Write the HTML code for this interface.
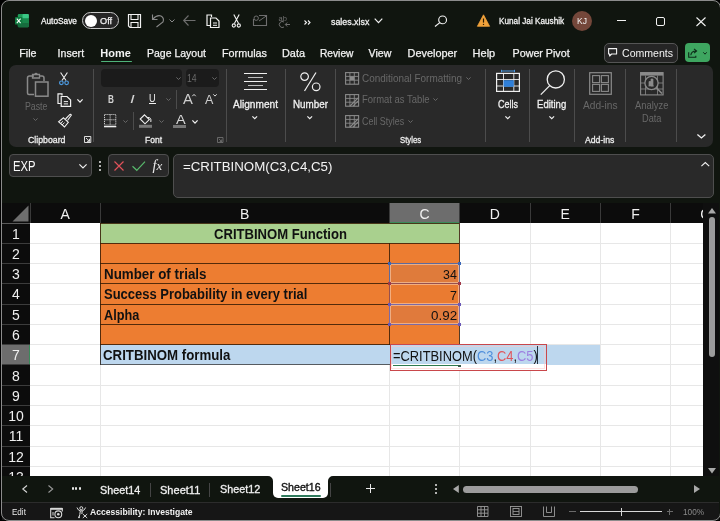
<!DOCTYPE html>
<html><head><meta charset="utf-8">
<style>
*{margin:0;padding:0;box-sizing:border-box}
html,body{width:720px;height:521px;overflow:hidden;background:#000}
body{position:relative;font-family:"Liberation Sans",sans-serif;color:#fff}
.a{position:absolute}
.t{position:absolute;white-space:pre}
svg{position:absolute;overflow:visible}
</style></head><body>
<div id="root" style="position:absolute;left:0;top:0;width:720px;height:521px;overflow:hidden;will-change:transform">

<div class="a" style="left:1.00px;top:0.40px;width:719.60px;height:520.60px;background:#10150f;border-radius:8px;"></div>
<svg style="left:15px;top:14px" width="14" height="14" viewBox="0 0 14 14">
<rect x="2.8" y="0" width="11" height="13.3" rx="1.2" fill="#1f9a58"/>
<rect x="7.5" y="0" width="6.3" height="4.4" rx="1" fill="#3bc785"/>
<rect x="2.8" y="4.4" width="11" height="4.5" fill="#19874c"/>
<rect x="2.8" y="8.9" width="11" height="4.4" rx="1" fill="#176c3e"/>
<rect x="0" y="3" width="7.4" height="7.6" rx="0.9" fill="#0f7a3f"/>
<path d="M1.8 4.6 L5.6 9.1 M5.6 4.6 L1.8 9.1" stroke="#fff" stroke-width="1.05"/>
</svg>
<div class="t" style="left:41.30px;top:16px;font-size:8.6px;line-height:10px;color:#f2f2f2;font-weight:400;transform:scaleX(0.9630);transform-origin:0 0;-webkit-text-stroke:0.3px #f2f2f2;">AutoSave</div>
<div class="a" style="left:82.00px;top:12.00px;width:36.50px;height:17.00px;border:1px solid #c8c8c8;border-radius:9px;background:#262626;"></div>
<div class="a" style="left:84.5px;top:14.5px;width:12px;height:12px;border-radius:6px;background:#fff"></div>
<div class="t" style="left:100.20px;top:16px;font-size:9.0px;line-height:10px;color:#f2f2f2;font-weight:400;transform:scaleX(1.0185);transform-origin:0 0;-webkit-text-stroke:0.25px #f2f2f2;">Off</div>
<svg style="left:127px;top:13px" width="15" height="16" viewBox="0 0 15 16">
<path d="M1.5 1.5 H13.5 V14.5 H3 L1.5 13 Z" fill="none" stroke="#f2f2f2" stroke-width="1.2"/>
<path d="M4 1.5 V6.5 H11 V1.5" fill="none" stroke="#f2f2f2" stroke-width="1.1"/>
<path d="M4 14.5 V9.5 H11 V14.5" fill="none" stroke="#f2f2f2" stroke-width="1.1"/>
</svg>
<svg style="left:151px;top:13px" width="14" height="15" viewBox="0 0 14 15">
<path d="M1.5 1.5 V6.5 H6.5" fill="none" stroke="#8a8a8a" stroke-width="1.1"/>
<path d="M1.8 6.2 Q6 1.5 10 3 Q13.5 5 12 9 L5.5 14" fill="none" stroke="#8a8a8a" stroke-width="1.1"/>
</svg>
<svg style="left:168.5px;top:19px" width="6" height="4" viewBox="0 0 6 4"><path d="M0.5 0.5 L3 3 L5.5 0.5" fill="none" stroke="#8a8a8a" stroke-width="1"/></svg>
<svg style="left:182.5px;top:15px" width="13" height="11" viewBox="0 0 13 11"><path d="M5.5 0.5 L0.7 5.5 L5.5 10.5 M0.7 5.5 H12.5" fill="none" stroke="#6e6e6e" stroke-width="1.1"/></svg>
<svg style="left:206px;top:14px" width="14" height="14" viewBox="0 0 14 14">
<path d="M5.5 3 V1 H1 V11.5 H4" fill="none" stroke="#f2f2f2" stroke-width="1.2"/>
<path d="M4.5 4 H10 L13 7 V13.5 H4.5 Z" fill="none" stroke="#f2f2f2" stroke-width="1.2"/>
<path d="M7 9 H11 M7 11.3 H11" stroke="#f2f2f2" stroke-width="1"/>
</svg>
<svg style="left:231px;top:14px" width="11" height="14" viewBox="0 0 11 14">
<path d="M2.8 0.5 L7.6 9.6 M8.2 0.5 L3.4 9.6" stroke="#f2f2f2" stroke-width="1.1"/>
<circle cx="2.8" cy="11.5" r="1.6" fill="none" stroke="#f2f2f2" stroke-width="1.1"/>
<circle cx="7.8" cy="11.5" r="1.6" fill="none" stroke="#f2f2f2" stroke-width="1.1"/>
</svg>
<svg style="left:253px;top:15px" width="15" height="11" viewBox="0 0 15 11">
<path d="M0.5 4 V10.5 H13.5 V0.5 H6" fill="none" stroke="#6e6e6e" stroke-width="1.1"/>
<path d="M6 6 L13.5 0.8" stroke="#6e6e6e" stroke-width="1"/>
<circle cx="3.2" cy="3.2" r="2.2" fill="none" stroke="#6e6e6e" stroke-width="1"/>
</svg>
<div class="t" style="left:278.50px;top:14px;font-size:7.5px;line-height:9px;color:#707070;font-weight:400;">ab</div>
<svg style="left:279px;top:21px" width="12" height="7" viewBox="0 0 12 7"><path d="M5 1 A3 3 0 1 0 5 6 M11 3.5 H6.5 M8.2 1.5 L6.3 3.5 L8.2 5.5" fill="none" stroke="#707070" stroke-width="1"/></svg>
<svg style="left:303.5px;top:19.5px" width="7" height="5" viewBox="0 0 7 5"><path d="M0.5 0.5 L2.5 2.5 L0.5 4.5 M4 0.5 L6 2.5 L4 4.5" fill="none" stroke="#f2f2f2" stroke-width="1.1"/></svg>
<div class="t" style="left:331.20px;top:17px;font-size:9.0px;line-height:10px;color:#f2f2f2;font-weight:400;transform:scaleX(0.9817);transform-origin:0 0;-webkit-text-stroke:0.3px #f2f2f2;">sales.xlsx</div>
<svg style="left:374px;top:18px" width="9" height="6" viewBox="0 0 9 6"><path d="M0.7 0.7 L4.5 4.6 L8.3 0.7" fill="none" stroke="#f2f2f2" stroke-width="1.2"/></svg>
<svg style="left:434px;top:15px" width="14" height="12" viewBox="0 0 14 12"><circle cx="8.6" cy="4.9" r="3.9" fill="none" stroke="#f2f2f2" stroke-width="1.1"/><path d="M5.8 7.6 L1 11.5" stroke="#f2f2f2" stroke-width="1.2"/></svg>
<svg style="left:476.5px;top:14px" width="13" height="13" viewBox="0 0 13 13"><path d="M6.5 0.8 L12.6 12.3 H0.4 Z" fill="#f0a13a" stroke="#f0a13a" stroke-width="0.8" stroke-linejoin="round"/><path d="M6.5 4.5 V8.6" stroke="#2a1a00" stroke-width="1.2"/><circle cx="6.5" cy="10.4" r="0.7" fill="#2a1a00"/></svg>
<div class="t" style="left:499.00px;top:16px;font-size:8.8px;line-height:10px;color:#f2f2f2;font-weight:400;transform:scaleX(0.9314);transform-origin:0 0;-webkit-text-stroke:0.3px #f2f2f2;">Kunal Jai Kaushik</div>
<div class="a" style="left:572px;top:11px;width:20px;height:20px;border-radius:10px;background:#74473a"></div>
<div class="t" style="left:572px;top:14px;width:20px;line-height:14px;text-align:center;font-size:8.5px;color:#f5f5f5">KJ</div>
<div class="a" style="left:616.50px;top:19.80px;width:9.50px;height:1.10px;background:#f2f2f2;"></div>
<div class="a" style="left:655.80px;top:16.50px;width:9.50px;height:9.20px;border:1.2px solid #f2f2f2;border-radius:2px;"></div>
<svg style="left:695.5px;top:16.5px" width="10" height="9.5" viewBox="0 0 10 9.5"><path d="M0.5 0.5 L9.5 9 M9.5 0.5 L0.5 9" stroke="#f2f2f2" stroke-width="1.1"/></svg>
<div class="t" style="left:19.30px;top:47px;font-size:10.7px;line-height:12px;color:#f2f2f2;font-weight:400;-webkit-text-stroke:0.25px #f2f2f2;">File</div>
<div class="t" style="left:57.60px;top:47px;font-size:10.6px;line-height:12px;color:#f2f2f2;font-weight:400;-webkit-text-stroke:0.25px #f2f2f2;">Insert</div>
<div class="t" style="left:100.30px;top:47px;font-size:11.0px;line-height:12px;color:#f2f2f2;font-weight:700;">Home</div>
<div class="t" style="left:147.00px;top:47px;font-size:10.5px;line-height:12px;color:#f2f2f2;font-weight:400;-webkit-text-stroke:0.25px #f2f2f2;">Page Layout</div>
<div class="t" style="left:222.00px;top:47px;font-size:10.8px;line-height:12px;color:#f2f2f2;font-weight:400;-webkit-text-stroke:0.25px #f2f2f2;">Formulas</div>
<div class="t" style="left:282.00px;top:47px;font-size:10.9px;line-height:12px;color:#f2f2f2;font-weight:400;-webkit-text-stroke:0.25px #f2f2f2;">Data</div>
<div class="t" style="left:320.00px;top:48px;font-size:10.2px;line-height:11px;color:#f2f2f2;font-weight:400;-webkit-text-stroke:0.25px #f2f2f2;">Review</div>
<div class="t" style="left:368.60px;top:47px;font-size:10.6px;line-height:12px;color:#f2f2f2;font-weight:400;-webkit-text-stroke:0.25px #f2f2f2;">View</div>
<div class="t" style="left:407.60px;top:47px;font-size:10.9px;line-height:12px;color:#f2f2f2;font-weight:400;-webkit-text-stroke:0.25px #f2f2f2;">Developer</div>
<div class="t" style="left:472.60px;top:47px;font-size:11.0px;line-height:12px;color:#f2f2f2;font-weight:400;-webkit-text-stroke:0.25px #f2f2f2;">Help</div>
<div class="t" style="left:512.60px;top:47px;font-size:10.7px;line-height:12px;color:#f2f2f2;font-weight:400;-webkit-text-stroke:0.25px #f2f2f2;">Power Pivot</div>
<div class="a" style="left:101.00px;top:60.50px;width:30.70px;height:1.80px;background:#4fb37a;border-radius:1px;"></div>
<div class="a" style="left:604.20px;top:42.70px;width:73.60px;height:20.00px;border:1px solid #555;border-radius:5px;background:#252525;"></div>
<svg style="left:608.3px;top:48.3px" width="10" height="9" viewBox="0 0 10 9"><path d="M0.6 0.6 H8.6 V6 H3.6 L1.6 8 V6 H0.6 Z" fill="none" stroke="#f2f2f2" stroke-width="1.1" stroke-linejoin="round"/></svg>
<div class="t" style="left:621.70px;top:48px;font-size:10.3px;line-height:11px;color:#f2f2f2;font-weight:400;transform:scaleX(1.0261);transform-origin:0 0;">Comments</div>
<div class="a" style="left:684.70px;top:43.00px;width:25.30px;height:19.30px;background:#3ea660;border-radius:4px;"></div>
<svg style="left:688.3px;top:48px" width="10" height="10" viewBox="0 0 10 10"><path d="M0.7 4.2 V9.3 H7.8 V7.8" fill="none" stroke="#0d2a18" stroke-width="1.1"/><path d="M2.8 7.3 Q3.2 3 8 3 M6 0.8 L8.6 3 L6 5.2" fill="none" stroke="#0d2a18" stroke-width="1.1"/></svg>
<svg style="left:702.5px;top:52px" width="4" height="3" viewBox="0 0 4 3"><path d="M0.3 0.3 L2 2.2 L3.7 0.3" fill="none" stroke="#0d2a18" stroke-width="1"/></svg>
<div class="a" style="left:9.00px;top:65.40px;width:704.30px;height:81.90px;background:#292929;border-radius:7px;"></div>
<svg style="left:26px;top:72.5px" width="23" height="24" viewBox="0 0 23 24">
<path d="M8 3 H3.5 Q1.5 3 1.5 5 V20 Q1.5 21.5 3 21.5 H8" fill="none" stroke="#8a8a8a" stroke-width="1.5"/>
<path d="M6.5 1.5 H13.5 V5 H6.5 Z M8.5 1.5 Q10 -0.8 11.5 1.5" fill="none" stroke="#8a8a8a" stroke-width="1.3"/>
<path d="M14 3 H16 Q18 3 18 5 V8" fill="none" stroke="#8a8a8a" stroke-width="1.5"/>
<rect x="9.5" y="9" width="12.5" height="14.2" fill="none" stroke="#8a8a8a" stroke-width="1.5"/>
</svg>
<div class="t" style="left:24.60px;top:101px;font-size:10px;line-height:11px;color:#686868;font-weight:400;transform:scaleX(0.8767);transform-origin:0 0;">Paste</div>
<svg style="left:33.0px;top:117.89999999999999px" width="5" height="2.8" viewBox="0 0 5 2.8"><path d="M0.4 0.4 L2.5 2.5 L4.6 0.4" fill="none" stroke="#666" stroke-width="1"/></svg>
<svg style="left:59.4px;top:72px" width="10" height="13.5" viewBox="0 0 10 13.5">
<path d="M1.6 0.5 L7 8.5 M8.4 0.5 L3 8.5" stroke="#f0f0f0" stroke-width="1.1"/>
<circle cx="2.4" cy="10.8" r="1.8" fill="none" stroke="#4c9ae0" stroke-width="1.2"/>
<circle cx="7.6" cy="10.8" r="1.8" fill="none" stroke="#4c9ae0" stroke-width="1.2"/>
</svg>
<svg style="left:57px;top:93px" width="15" height="14" viewBox="0 0 15 14">
<path d="M5 2.5 V0.8 H1 V10.5 H3.8" fill="none" stroke="#f0f0f0" stroke-width="1.2"/>
<path d="M4.2 3.5 H10 L13.6 7 V13.3 H4.2 Z" fill="none" stroke="#f0f0f0" stroke-width="1.2"/>
<path d="M6.8 8.6 H11 M6.8 10.9 H11" stroke="#f0f0f0" stroke-width="1"/>
</svg>
<svg style="left:76.7px;top:98.6px" width="6" height="3.4" viewBox="0 0 6 3.4"><path d="M0.4 0.4 L3.0 3.1 L5.6 0.4" fill="none" stroke="#f0f0f0" stroke-width="1.3"/></svg>
<svg style="left:57.7px;top:114px" width="14" height="13.5" viewBox="0 0 14 13.5">
<path d="M7.5 5 L11.5 0.8 Q12.8 -0.2 13.3 1.2 L9.5 6.5" fill="none" stroke="#f0f0f0" stroke-width="1.1"/>
<path d="M5.5 3.8 L10.3 8.3 L6.5 13 L0.6 7.7 Z" fill="none" stroke="#f0f0f0" stroke-width="1.1"/>
<path d="M2.5 9.5 L5 7.2 M4 11 L6.5 8.6" stroke="#f0f0f0" stroke-width="0.9"/>
</svg>
<div class="t" style="left:27.50px;top:134px;font-size:9.8px;line-height:11px;color:#f0f0f0;font-weight:400;transform:scaleX(0.8940);transform-origin:0 0;-webkit-text-stroke:0.3px #f0f0f0;">Clipboard</div>
<svg style="left:83.5px;top:136px" width="7.5" height="7" viewBox="0 0 7.5 7"><path d="M0.5 0.5 H6.8 V6.5 H0.5 Z" fill="none" stroke="#f0f0f0" stroke-width="0.9"/><path d="M2 2 L5.5 5.3 M5.5 2.8 V5.3 H3" fill="none" stroke="#f0f0f0" stroke-width="0.9"/></svg>
<div class="a" style="left:92.80px;top:69.00px;width:1.00px;height:72.50px;background:#4c4c4c;"></div>
<div class="a" style="left:101.00px;top:69.00px;width:80.80px;height:17.60px;background:#1b1b1b;border-radius:4px;"></div>
<svg style="left:175.8px;top:77.1px" width="5" height="2.8" viewBox="0 0 5 2.8"><path d="M0.4 0.4 L2.5 2.5 L4.6 0.4" fill="none" stroke="#686868" stroke-width="1"/></svg>
<div class="a" style="left:185.80px;top:69.00px;width:33.10px;height:17.60px;background:#1b1b1b;border-radius:4px;"></div>
<div class="t" style="left:187.40px;top:72px;font-size:10.5px;line-height:12px;color:#6a6a6a;font-weight:400;transform:scaleX(0.8237);transform-origin:0 0;">14</div>
<svg style="left:212.1px;top:77.1px" width="5" height="2.8" viewBox="0 0 5 2.8"><path d="M0.4 0.4 L2.5 2.5 L4.6 0.4" fill="none" stroke="#686868" stroke-width="1"/></svg>
<div class="t" style="left:107.70px;top:94px;font-size:10.2px;line-height:11px;color:#d4d4d4;font-weight:700;transform:scaleX(0.8034);transform-origin:0 0;">B</div>
<div class="t" style="left:129.70px;top:94px;font-size:10.2px;line-height:11px;color:#d4d4d4;font-weight:400;transform:scaleX(1.6457);transform-origin:0 0;font-style:italic;">I</div>
<div class="t" style="left:149.20px;top:93px;font-size:10.2px;line-height:11px;color:#f0f0f0;font-weight:400;transform:scaleX(0.8987);transform-origin:0 0;">U</div>
<div class="a" style="left:148.80px;top:103.40px;width:7.40px;height:1.00px;background:#f0f0f0;"></div>
<svg style="left:166.4px;top:98.3px" width="5" height="2.8" viewBox="0 0 5 2.8"><path d="M0.4 0.4 L2.5 2.5 L4.6 0.4" fill="none" stroke="#686868" stroke-width="1"/></svg>
<div class="a" style="left:176.10px;top:89.80px;width:1.00px;height:19.20px;background:#4c4c4c;"></div>
<div class="t" style="left:182.60px;top:91px;font-size:14px;line-height:16px;color:#cfcfcf;font-weight:400;transform:scaleX(1.0554);transform-origin:0 0;">A</div>
<svg style="left:192.3px;top:93.8px" width="4" height="2.5" viewBox="0 0 4 2.5"><path d="M0.3 2.2 L2 0.4 L3.7 2.2" fill="none" stroke="#f0f0f0" stroke-width="0.9"/></svg>
<div class="t" style="left:205.00px;top:93px;font-size:12px;line-height:14px;color:#cfcfcf;font-weight:400;transform:scaleX(1.0448);transform-origin:0 0;">A</div>
<svg style="left:212.8px;top:93.8px" width="4" height="2.5" viewBox="0 0 4 2.5"><path d="M0.3 0.3 L2 2.1 L3.7 0.3" fill="none" stroke="#f0f0f0" stroke-width="0.9"/></svg>
<svg style="left:103.7px;top:114px" width="12.5" height="13.5" viewBox="0 0 12.5 13.5">
<path d="M0.5 0.5 H11.8 V11 H0.5 Z M6.15 0.5 V11 M0.5 5.75 H11.8" fill="none" stroke="#f0f0f0" stroke-width="0.8" stroke-dasharray="1.2 0.8"/>
<path d="M0 12.6 H12.3" stroke="#f0f0f0" stroke-width="1.4"/>
</svg>
<svg style="left:123.0px;top:119.89999999999999px" width="5" height="2.8" viewBox="0 0 5 2.8"><path d="M0.4 0.4 L2.5 2.5 L4.6 0.4" fill="none" stroke="#686868" stroke-width="1"/></svg>
<div class="a" style="left:133.40px;top:111.60px;width:1.00px;height:18.40px;background:#4c4c4c;"></div>
<svg style="left:139px;top:114px" width="13.5" height="14" viewBox="0 0 13.5 14">
<path d="M5.5 0.8 L10.3 5.6 L6 9.8 L1.2 5 Z" fill="none" stroke="#f0f0f0" stroke-width="1.1"/>
<path d="M8.3 3.5 Q12.8 3 11.8 8" fill="none" stroke="#f0f0f0" stroke-width="1"/>
<rect x="0" y="10.8" width="13" height="3" fill="#777"/>
</svg>
<svg style="left:158.5px;top:119.89999999999999px" width="5" height="2.8" viewBox="0 0 5 2.8"><path d="M0.4 0.4 L2.5 2.5 L4.6 0.4" fill="none" stroke="#686868" stroke-width="1"/></svg>
<div class="t" style="left:175.60px;top:113px;font-size:12.5px;line-height:14px;color:#d8d8d8;font-weight:400;transform:scaleX(1.1582);transform-origin:0 0;">A</div>
<div class="a" style="left:173.00px;top:124.60px;width:13.00px;height:3.20px;background:#777;"></div>
<svg style="left:191.7px;top:119.6px" width="6" height="3.4" viewBox="0 0 6 3.4"><path d="M0.4 0.4 L3.0 3.1 L5.6 0.4" fill="none" stroke="#f0f0f0" stroke-width="1.3"/></svg>
<div class="t" style="left:144.80px;top:134px;font-size:9.8px;line-height:11px;color:#f0f0f0;font-weight:400;transform:scaleX(0.8673);transform-origin:0 0;-webkit-text-stroke:0.3px #f0f0f0;">Font</div>
<svg style="left:216.5px;top:136.6px" width="6.5" height="6" viewBox="0 0 6.5 6"><path d="M0.5 0.5 H6 V5.5 H0.5 Z" fill="none" stroke="#777" stroke-width="0.8"/><path d="M1.8 1.8 L4.7 4.5 M4.7 2.5 V4.5 H2.7" fill="none" stroke="#777" stroke-width="0.8"/></svg>
<div class="a" style="left:226.10px;top:69.00px;width:1.00px;height:72.50px;background:#4c4c4c;"></div>
<div class="a" style="left:244.00px;top:72.70px;width:22.70px;height:1.00px;background:#f0f0f0;"></div>
<div class="a" style="left:247.50px;top:76.85px;width:15.70px;height:1.00px;background:#f0f0f0;background:#bdbdbd;"></div>
<div class="a" style="left:244.00px;top:81.00px;width:22.70px;height:1.00px;background:#f0f0f0;"></div>
<div class="a" style="left:247.50px;top:85.15px;width:15.70px;height:1.00px;background:#f0f0f0;background:#bdbdbd;"></div>
<div class="a" style="left:244.00px;top:89.30px;width:22.70px;height:1.00px;background:#f0f0f0;"></div>
<div class="t" style="left:233.00px;top:98px;font-size:10.6px;line-height:12px;color:#f0f0f0;font-weight:400;transform:scaleX(0.9551);transform-origin:0 0;-webkit-text-stroke:0.3px #f0f0f0;">Alignment</div>
<svg style="left:252.45px;top:115.7px" width="5.5" height="3" viewBox="0 0 5.5 3"><path d="M0.4 0.4 L2.75 2.7 L5.1 0.4" fill="none" stroke="#f0f0f0" stroke-width="1.2"/></svg>
<div class="a" style="left:284.80px;top:69.00px;width:1.00px;height:72.50px;background:#4c4c4c;"></div>
<svg style="left:300px;top:72.3px" width="21" height="19.5" viewBox="0 0 21 19.5">
<circle cx="4.6" cy="4.6" r="3.8" fill="none" stroke="#f0f0f0" stroke-width="1.2"/>
<circle cx="16.2" cy="14.8" r="3.8" fill="none" stroke="#f0f0f0" stroke-width="1.2"/>
<path d="M16 0.5 L4.5 19" stroke="#f0f0f0" stroke-width="1.2"/>
</svg>
<div class="t" style="left:292.50px;top:98px;font-size:10.6px;line-height:12px;color:#f0f0f0;font-weight:400;transform:scaleX(0.9288);transform-origin:0 0;-webkit-text-stroke:0.3px #f0f0f0;">Number</div>
<svg style="left:306.95px;top:115.7px" width="5.5" height="3" viewBox="0 0 5.5 3"><path d="M0.4 0.4 L2.75 2.7 L5.1 0.4" fill="none" stroke="#f0f0f0" stroke-width="1.2"/></svg>
<div class="a" style="left:334.80px;top:69.00px;width:1.00px;height:72.50px;background:#4c4c4c;"></div>
<svg style="left:345px;top:72.3px" width="14" height="13" viewBox="0 0 14 13"><rect x="0.6" y="0.6" width="13" height="11.6" fill="none" stroke="#8a8a8a" stroke-width="1.1"/><path d="M0.6 4.4 H13.6 M0.6 8.2 H13.6 M4.9 0.6 V12.2 M9.3 0.6 V12.2" stroke="#8a8a8a" stroke-width="0.9"/><rect x="4.9" y="4.4" width="4.4" height="3.8" fill="#8a8a8a"/></svg>
<div class="t" style="left:362.00px;top:72px;font-size:10.5px;line-height:12px;color:#686868;font-weight:400;transform:scaleX(0.9467);transform-origin:0 0;">Conditional Formatting</div>
<svg style="left:465.8px;top:77.39999999999999px" width="5" height="2.8" viewBox="0 0 5 2.8"><path d="M0.4 0.4 L2.5 2.5 L4.6 0.4" fill="none" stroke="#686868" stroke-width="1"/></svg>
<svg style="left:345px;top:93.7px" width="14" height="13" viewBox="0 0 14 13"><rect x="0.6" y="0.6" width="13" height="11.6" fill="none" stroke="#8a8a8a" stroke-width="1.1"/><path d="M0.6 4.4 H13.6 M0.6 8.2 H13.6 M4.9 0.6 V12.2 M9.3 0.6 V12.2" stroke="#8a8a8a" stroke-width="0.9"/><path d="M5 12 L13 4 M8 12.2 L13.6 6.6" stroke="#8a8a8a" stroke-width="1.1"/></svg>
<div class="t" style="left:362.30px;top:93px;font-size:10.5px;line-height:12px;color:#686868;font-weight:400;transform:scaleX(0.8991);transform-origin:0 0;">Format as Table</div>
<svg style="left:433.1px;top:98.39999999999999px" width="5" height="2.8" viewBox="0 0 5 2.8"><path d="M0.4 0.4 L2.5 2.5 L4.6 0.4" fill="none" stroke="#686868" stroke-width="1"/></svg>
<svg style="left:345px;top:115px" width="14" height="13" viewBox="0 0 14 13"><rect x="0.6" y="0.6" width="13" height="11.6" fill="none" stroke="#8a8a8a" stroke-width="1.1"/><path d="M0.6 4.4 H13.6 M0.6 8.2 H13.6 M4.9 0.6 V12.2 M9.3 0.6 V12.2" stroke="#8a8a8a" stroke-width="0.9"/><path d="M5 12 L13 4 M8 12.2 L13.6 6.6" stroke="#8a8a8a" stroke-width="1.1"/></svg>
<div class="t" style="left:362.30px;top:115px;font-size:10.5px;line-height:12px;color:#686868;font-weight:400;transform:scaleX(0.8486);transform-origin:0 0;">Cell Styles</div>
<svg style="left:407.7px;top:119.89999999999999px" width="5" height="2.8" viewBox="0 0 5 2.8"><path d="M0.4 0.4 L2.5 2.5 L4.6 0.4" fill="none" stroke="#686868" stroke-width="1"/></svg>
<div class="t" style="left:399.60px;top:134px;font-size:9.8px;line-height:11px;color:#f0f0f0;font-weight:400;transform:scaleX(0.7939);transform-origin:0 0;-webkit-text-stroke:0.3px #f0f0f0;">Styles</div>
<div class="a" style="left:485.00px;top:69.00px;width:1.00px;height:72.50px;background:#4c4c4c;"></div>
<svg style="left:495.8px;top:69.5px" width="24" height="22" viewBox="0 0 24 22">
<path d="M5.5 1 H18.5 M5.5 -0.2 V2.2 M18.5 -0.2 V2.2" stroke="#4c9ae0" stroke-width="1"/>
<rect x="0.6" y="3.4" width="22.8" height="18" fill="none" stroke="#f0f0f0" stroke-width="1.2"/>
<path d="M0.6 9.5 H23.4 M0.6 16 H23.4 M7.5 3.4 V21.4 M17.8 3.4 V21.4" stroke="#f0f0f0" stroke-width="0.9"/>
<rect x="7.5" y="10.2" width="10.3" height="6.6" fill="#2f7fd8"/>
</svg>
<div class="t" style="left:497.50px;top:98px;font-size:10.6px;line-height:12px;color:#f0f0f0;font-weight:400;transform:scaleX(0.8480);transform-origin:0 0;-webkit-text-stroke:0.3px #f0f0f0;">Cells</div>
<svg style="left:504.85px;top:115.7px" width="5.5" height="3" viewBox="0 0 5.5 3"><path d="M0.4 0.4 L2.75 2.7 L5.1 0.4" fill="none" stroke="#f0f0f0" stroke-width="1.2"/></svg>
<div class="a" style="left:529.00px;top:69.00px;width:1.00px;height:72.50px;background:#4c4c4c;"></div>
<svg style="left:539.5px;top:70px" width="26" height="25.5" viewBox="0 0 26 25.5"><circle cx="15.8" cy="9.4" r="8.6" fill="none" stroke="#f0f0f0" stroke-width="1.3"/><path d="M9.7 15.6 L0.8 24.6" stroke="#f0f0f0" stroke-width="1.3"/></svg>
<div class="t" style="left:537.00px;top:98px;font-size:10.6px;line-height:12px;color:#f0f0f0;font-weight:400;transform:scaleX(0.9033);transform-origin:0 0;-webkit-text-stroke:0.3px #f0f0f0;">Editing</div>
<svg style="left:549.05px;top:115.7px" width="5.5" height="3" viewBox="0 0 5.5 3"><path d="M0.4 0.4 L2.75 2.7 L5.1 0.4" fill="none" stroke="#f0f0f0" stroke-width="1.2"/></svg>
<div class="a" style="left:574.10px;top:69.00px;width:1.00px;height:72.50px;background:#4c4c4c;"></div>
<svg style="left:589px;top:72px" width="23" height="23" viewBox="0 0 23 23"><rect x="0.7" y="0.7" width="21.6" height="21.6" fill="none" stroke="#8a8a8a" stroke-width="1.2"/><rect x="3.6" y="3.6" width="7" height="7" fill="none" stroke="#8a8a8a" stroke-width="1.1"/><rect x="12.4" y="3.6" width="7" height="7" fill="none" stroke="#8a8a8a" stroke-width="1.1"/><rect x="3.6" y="12.4" width="7" height="7" fill="none" stroke="#8a8a8a" stroke-width="1.1"/><rect x="12.4" y="12.4" width="7" height="7" fill="none" stroke="#8a8a8a" stroke-width="1.1"/></svg>
<div class="t" style="left:583.00px;top:99px;font-size:10.6px;line-height:12px;color:#686868;font-weight:400;transform:scaleX(0.9601);transform-origin:0 0;">Add-ins</div>
<div class="t" style="left:585.00px;top:134px;font-size:9.8px;line-height:11px;color:#f0f0f0;font-weight:400;transform:scaleX(0.8850);transform-origin:0 0;-webkit-text-stroke:0.3px #f0f0f0;">Add-ins</div>
<div class="a" style="left:625.30px;top:69.00px;width:1.00px;height:72.50px;background:#4c4c4c;"></div>
<svg style="left:639.8px;top:72px" width="24" height="23.5" viewBox="0 0 24 23.5">
<rect x="0.6" y="0.6" width="22.5" height="22.3" fill="none" stroke="#8a8a8a" stroke-width="1.1"/>
<rect x="0.6" y="0.6" width="22.5" height="3" fill="#8a8a8a"/>
<path d="M0.6 11 H23 M0.6 17 H23 M5.5 3.6 V23 M17.5 3.6 V23" stroke="#8a8a8a" stroke-width="0.8"/>
<circle cx="11.5" cy="11" r="6.6" fill="#292929" stroke="#8a8a8a" stroke-width="1.3"/>
<path d="M9 14 V9.5 H11 V14 M11 14 V7 H13 V14 Z M8.5 14 H14" fill="#8a8a8a" stroke="#8a8a8a" stroke-width="0.7"/>
<path d="M16.3 15.8 L22 21.5" stroke="#8a8a8a" stroke-width="1.6"/>
</svg>
<div class="t" style="left:634.60px;top:99px;font-size:10.6px;line-height:12px;color:#686868;font-weight:400;transform:scaleX(0.8851);transform-origin:0 0;">Analyze</div>
<div class="t" style="left:641.50px;top:112px;font-size:10.6px;line-height:12px;color:#686868;font-weight:400;transform:scaleX(0.8698);transform-origin:0 0;">Data</div>
<div class="a" style="left:676.20px;top:69.00px;width:1.00px;height:72.50px;background:#4c4c4c;"></div>
<svg style="left:697.0px;top:134.3px" width="8.8" height="4.2" viewBox="0 0 8.8 4.2"><path d="M0.4 0.4 L4.4 3.9000000000000004 L8.4 0.4" fill="none" stroke="#f0f0f0" stroke-width="1.3"/></svg>
<div class="a" style="left:9.20px;top:154.20px;width:82.50px;height:23.30px;background:#292929;border:1px solid #4e4e4e;border-radius:4px;"></div>
<div class="t" style="left:13.30px;top:158px;font-size:14px;line-height:16px;color:#fafafa;font-weight:400;transform:scaleX(0.8036);transform-origin:0 0;">EXP</div>
<svg style="left:79.0px;top:164.1px" width="8" height="4.2" viewBox="0 0 8 4.2"><path d="M0.4 0.4 L4.0 3.9000000000000004 L7.6 0.4" fill="none" stroke="#f0f0f0" stroke-width="1.2"/></svg>
<div class="a" style="left:99px;top:161.3px;width:2.2px;height:2.2px;border-radius:1.1px;background:#e8e8e8"></div>
<div class="a" style="left:99px;top:165.0px;width:2.2px;height:2.2px;border-radius:1.1px;background:#e8e8e8"></div>
<div class="a" style="left:99px;top:168.7px;width:2.2px;height:2.2px;border-radius:1.1px;background:#e8e8e8"></div>
<div class="a" style="left:108.30px;top:154.20px;width:60.40px;height:23.30px;background:#292929;border:1px solid #4e4e4e;border-radius:4px;"></div>
<svg style="left:114px;top:160.8px" width="10" height="10" viewBox="0 0 10 10"><path d="M0.5 0.5 L9.5 9.5 M9.5 0.5 L0.5 9.5" stroke="#e0525a" stroke-width="1.2"/></svg>
<svg style="left:131.7px;top:161px" width="13.5" height="10" viewBox="0 0 13.5 10"><path d="M0.5 5.2 L4.8 9.3 L13 0.6" fill="none" stroke="#58b86c" stroke-width="1.2"/></svg>
<div class="t" style="left:152.5px;top:157px;font-family:'Liberation Serif',serif;font-style:italic;font-size:14.5px;line-height:16px;color:#e8e8e8">f<span style="font-size:13px">x</span></div>
<div class="a" style="left:172.50px;top:154.20px;width:541.20px;height:43.80px;background:#292929;border:1px solid #4e4e4e;border-radius:5px;"></div>
<div class="t" style="left:182.50px;top:159px;font-size:13.4px;line-height:15px;color:#f4f4f4;font-weight:400;transform:scaleX(0.9917);transform-origin:0 0;">=CRITBINOM(C3,C4,C5)</div>
<svg style="left:701.4px;top:162px" width="8.6" height="4.6" viewBox="0 0 8.6 4.6"><path d="M0.4 4.2 L4.3 0.5 L8.2 4.2" fill="none" stroke="#f0f0f0" stroke-width="1.1"/></svg>
<div class="a" style="left:30.00px;top:223.14px;width:672.70px;height:252.86px;background:#fff;"></div>
<div class="a" style="left:2.00px;top:202.90px;width:700.70px;height:20.24px;background:#0c0c0c;"></div>
<div class="a" style="left:2.00px;top:223.14px;width:28.00px;height:252.86px;background:#0c0c0c;"></div>
<div class="a" style="left:702.70px;top:202.90px;width:16.30px;height:273.10px;background:#0f0f0f;"></div>
<div class="a" style="left:389.50px;top:202.90px;width:69.96px;height:20.24px;background:#6d6d6d;"></div>
<div class="a" style="left:2.00px;top:344.70px;width:28.00px;height:20.26px;background:#6d6d6d;"></div>
<div class="a" style="left:389.50px;top:221.84px;width:69.96px;height:1.30px;background:#3a8a5a;"></div>
<div class="a" style="left:28.70px;top:344.70px;width:1.30px;height:20.26px;background:#3a8a5a;"></div>
<svg style="left:12px;top:205px" width="17" height="17" viewBox="0 0 17 17"><path d="M16.5 0.5 L16.5 16.5 L0.5 16.5 Z" fill="#6e6e6e"/></svg>
<div class="a" style="left:30.00px;top:242.90px;width:672.70px;height:1.00px;background:#e7e7e7;"></div>
<div class="a" style="left:2.00px;top:242.90px;width:28.00px;height:1.00px;background:#3c3c3c;"></div>
<div class="a" style="left:30.00px;top:263.16px;width:672.70px;height:1.00px;background:#e7e7e7;"></div>
<div class="a" style="left:2.00px;top:263.16px;width:28.00px;height:1.00px;background:#3c3c3c;"></div>
<div class="a" style="left:30.00px;top:283.42px;width:672.70px;height:1.00px;background:#e7e7e7;"></div>
<div class="a" style="left:2.00px;top:283.42px;width:28.00px;height:1.00px;background:#3c3c3c;"></div>
<div class="a" style="left:30.00px;top:303.68px;width:672.70px;height:1.00px;background:#e7e7e7;"></div>
<div class="a" style="left:2.00px;top:303.68px;width:28.00px;height:1.00px;background:#3c3c3c;"></div>
<div class="a" style="left:30.00px;top:323.94px;width:672.70px;height:1.00px;background:#e7e7e7;"></div>
<div class="a" style="left:2.00px;top:323.94px;width:28.00px;height:1.00px;background:#3c3c3c;"></div>
<div class="a" style="left:30.00px;top:344.20px;width:672.70px;height:1.00px;background:#e7e7e7;"></div>
<div class="a" style="left:2.00px;top:344.20px;width:28.00px;height:1.00px;background:#3c3c3c;"></div>
<div class="a" style="left:30.00px;top:364.46px;width:672.70px;height:1.00px;background:#e7e7e7;"></div>
<div class="a" style="left:2.00px;top:364.46px;width:28.00px;height:1.00px;background:#3c3c3c;"></div>
<div class="a" style="left:30.00px;top:384.72px;width:672.70px;height:1.00px;background:#e7e7e7;"></div>
<div class="a" style="left:2.00px;top:384.72px;width:28.00px;height:1.00px;background:#3c3c3c;"></div>
<div class="a" style="left:30.00px;top:404.98px;width:672.70px;height:1.00px;background:#e7e7e7;"></div>
<div class="a" style="left:2.00px;top:404.98px;width:28.00px;height:1.00px;background:#3c3c3c;"></div>
<div class="a" style="left:30.00px;top:425.24px;width:672.70px;height:1.00px;background:#e7e7e7;"></div>
<div class="a" style="left:2.00px;top:425.24px;width:28.00px;height:1.00px;background:#3c3c3c;"></div>
<div class="a" style="left:30.00px;top:445.50px;width:672.70px;height:1.00px;background:#e7e7e7;"></div>
<div class="a" style="left:2.00px;top:445.50px;width:28.00px;height:1.00px;background:#3c3c3c;"></div>
<div class="a" style="left:30.00px;top:465.76px;width:672.70px;height:1.00px;background:#e7e7e7;"></div>
<div class="a" style="left:2.00px;top:465.76px;width:28.00px;height:1.00px;background:#3c3c3c;"></div>
<div class="a" style="left:99.60px;top:223.14px;width:1.00px;height:252.86px;background:#e7e7e7;"></div>
<div class="a" style="left:99.60px;top:202.90px;width:1.00px;height:20.24px;background:#3a3a3a;"></div>
<div class="a" style="left:389.00px;top:223.14px;width:1.00px;height:252.86px;background:#e7e7e7;"></div>
<div class="a" style="left:389.00px;top:202.90px;width:1.00px;height:20.24px;background:#3a3a3a;"></div>
<div class="a" style="left:458.96px;top:223.14px;width:1.00px;height:252.86px;background:#e7e7e7;"></div>
<div class="a" style="left:458.96px;top:202.90px;width:1.00px;height:20.24px;background:#3a3a3a;"></div>
<div class="a" style="left:529.50px;top:223.14px;width:1.00px;height:252.86px;background:#e7e7e7;"></div>
<div class="a" style="left:529.50px;top:202.90px;width:1.00px;height:20.24px;background:#3a3a3a;"></div>
<div class="a" style="left:599.95px;top:223.14px;width:1.00px;height:252.86px;background:#e7e7e7;"></div>
<div class="a" style="left:599.95px;top:202.90px;width:1.00px;height:20.24px;background:#3a3a3a;"></div>
<div class="a" style="left:670.00px;top:223.14px;width:1.00px;height:252.86px;background:#e7e7e7;"></div>
<div class="a" style="left:670.00px;top:202.90px;width:1.00px;height:20.24px;background:#3a3a3a;"></div>
<div class="a" style="left:2.00px;top:222.64px;width:28.00px;height:1.00px;background:#5a5a5a;"></div>
<div class="a" style="left:29.50px;top:202.90px;width:1.00px;height:20.24px;background:#3a3a3a;"></div>
<div class="t" style="left:30.0px;top:204.1px;width:70.1px;height:20.26px;line-height:20.26px;text-align:center;font-size:14px;color:#f0f0f0">A</div>
<div class="t" style="left:100.1px;top:204.1px;width:289.4px;height:20.26px;line-height:20.26px;text-align:center;font-size:14px;color:#f0f0f0">B</div>
<div class="t" style="left:389.5px;top:204.1px;width:70.0px;height:20.26px;line-height:20.26px;text-align:center;font-size:14px;color:#f0f0f0">C</div>
<div class="t" style="left:459.5px;top:204.1px;width:70.5px;height:20.26px;line-height:20.26px;text-align:center;font-size:14px;color:#f0f0f0">D</div>
<div class="t" style="left:530.0px;top:204.1px;width:70.5px;height:20.26px;line-height:20.26px;text-align:center;font-size:14px;color:#f0f0f0">E</div>
<div class="t" style="left:600.5px;top:204.1px;width:70.0px;height:20.26px;line-height:20.26px;text-align:center;font-size:14px;color:#f0f0f0">F</div>
<div class="t" style="left:670.5px;top:204.1px;width:70.3px;height:20.26px;line-height:20.26px;text-align:center;font-size:14px;color:#f0f0f0">G</div>
<div class="a" style="left:702.70px;top:202.90px;width:16.30px;height:20.24px;background:#0f0f0f;"></div>
<div class="t" style="left:2px;top:223.6px;width:28px;height:20.26px;line-height:20.26px;text-align:center;font-size:14px;color:#f0f0f0">1</div>
<div class="t" style="left:2px;top:243.9px;width:28px;height:20.26px;line-height:20.26px;text-align:center;font-size:14px;color:#f0f0f0">2</div>
<div class="t" style="left:2px;top:264.2px;width:28px;height:20.26px;line-height:20.26px;text-align:center;font-size:14px;color:#f0f0f0">3</div>
<div class="t" style="left:2px;top:284.4px;width:28px;height:20.26px;line-height:20.26px;text-align:center;font-size:14px;color:#f0f0f0">4</div>
<div class="t" style="left:2px;top:304.7px;width:28px;height:20.26px;line-height:20.26px;text-align:center;font-size:14px;color:#f0f0f0">5</div>
<div class="t" style="left:2px;top:324.9px;width:28px;height:20.26px;line-height:20.26px;text-align:center;font-size:14px;color:#f0f0f0">6</div>
<div class="t" style="left:2px;top:345.2px;width:28px;height:20.26px;line-height:20.26px;text-align:center;font-size:14px;color:#f0f0f0">7</div>
<div class="t" style="left:2px;top:365.5px;width:28px;height:20.26px;line-height:20.26px;text-align:center;font-size:14px;color:#f0f0f0">8</div>
<div class="t" style="left:2px;top:385.7px;width:28px;height:20.26px;line-height:20.26px;text-align:center;font-size:14px;color:#f0f0f0">9</div>
<div class="t" style="left:2px;top:406.0px;width:28px;height:20.26px;line-height:20.26px;text-align:center;font-size:14px;color:#f0f0f0">10</div>
<div class="t" style="left:2px;top:426.2px;width:28px;height:20.26px;line-height:20.26px;text-align:center;font-size:14px;color:#f0f0f0">11</div>
<div class="t" style="left:2px;top:446.5px;width:28px;height:20.26px;line-height:20.26px;text-align:center;font-size:14px;color:#f0f0f0">12</div>
<div class="t" style="left:2px;top:466.8px;width:28px;height:20.26px;line-height:20.26px;text-align:center;font-size:14px;color:#f0f0f0">13</div>
<div class="a" style="left:100.10px;top:223.14px;width:359.36px;height:20.26px;background:#a9d08e;"></div>
<div class="a" style="left:100.10px;top:243.40px;width:359.36px;height:101.30px;background:#ed7d31;"></div>
<div class="a" style="left:100.10px;top:344.70px;width:500.35px;height:20.26px;background:#bdd7ee;"></div>
<div class="a" style="left:100.10px;top:222.64px;width:359.36px;height:1.00px;background:rgba(55,28,5,0.85);"></div>
<div class="a" style="left:100.10px;top:242.90px;width:359.36px;height:1.00px;background:rgba(55,28,5,0.85);"></div>
<div class="a" style="left:100.10px;top:263.16px;width:359.36px;height:1.00px;background:rgba(55,28,5,0.85);"></div>
<div class="a" style="left:100.10px;top:283.42px;width:359.36px;height:1.00px;background:rgba(55,28,5,0.85);"></div>
<div class="a" style="left:100.10px;top:303.68px;width:359.36px;height:1.00px;background:rgba(55,28,5,0.85);"></div>
<div class="a" style="left:100.10px;top:323.94px;width:359.36px;height:1.00px;background:rgba(55,28,5,0.85);"></div>
<div class="a" style="left:100.10px;top:344.20px;width:359.36px;height:1.00px;background:rgba(55,28,5,0.85);"></div>
<div class="a" style="left:100.10px;top:364.46px;width:359.36px;height:1.00px;background:rgba(60,60,60,0.8);"></div>
<div class="a" style="left:99.60px;top:223.14px;width:1.00px;height:141.82px;background:rgba(55,28,5,0.85);"></div>
<div class="a" style="left:458.96px;top:223.14px;width:1.00px;height:121.56px;background:rgba(55,28,5,0.85);"></div>
<div class="a" style="left:389.00px;top:243.40px;width:1.00px;height:101.30px;background:rgba(55,28,5,0.85);"></div>
<div class="a" style="left:99.60px;top:344.70px;width:1.00px;height:20.26px;background:rgba(60,60,60,0.8);"></div>
<div class="t" style="left:213.75px;top:226px;font-size:14.5px;line-height:16px;color:#111;font-weight:700;transform:scaleX(0.9020);transform-origin:0 0;">CRITBINOM Function</div>
<div class="t" style="left:103.60px;top:266px;font-size:14px;line-height:16px;color:#111;font-weight:700;transform:scaleX(0.9546);transform-origin:0 0;">Number of trials</div>
<div class="t" style="left:103.60px;top:286px;font-size:14px;line-height:16px;color:#111;font-weight:700;transform:scaleX(0.9269);transform-origin:0 0;">Success Probability in every trial</div>
<div class="t" style="left:103.60px;top:307px;font-size:14px;line-height:16px;color:#111;font-weight:700;transform:scaleX(0.9079);transform-origin:0 0;">Alpha</div>
<div class="t" style="left:103.30px;top:347px;font-size:14px;line-height:16px;color:#111;font-weight:700;transform:scaleX(0.9463);transform-origin:0 0;">CRITBINOM formula</div>
<div class="a" style="left:389.50px;top:263.66px;width:69.96px;height:20.26px;background:rgba(110,110,150,0.10);"></div>
<div class="a" style="left:390.00px;top:264.16px;width:68.96px;height:19.26px;border:1px solid rgba(255,235,220,0.45);"></div>
<div class="a" style="left:389.00px;top:263.16px;width:70.96px;height:21.26px;border:1px solid #5d6a9c;"></div>
<div class="a" style="left:388.00px;top:262.16px;width:3.00px;height:3.00px;background:#3a66b8;"></div>
<div class="a" style="left:457.96px;top:262.16px;width:3.00px;height:3.00px;background:#3a66b8;"></div>
<div class="a" style="left:388.00px;top:282.42px;width:3.00px;height:3.00px;background:#3a66b8;"></div>
<div class="a" style="left:457.96px;top:282.42px;width:3.00px;height:3.00px;background:#3a66b8;"></div>
<div class="a" style="left:389.50px;top:283.92px;width:69.96px;height:20.26px;background:rgba(160,60,60,0.03);"></div>
<div class="a" style="left:390.00px;top:284.42px;width:68.96px;height:19.26px;border:1px solid rgba(255,235,220,0.45);"></div>
<div class="a" style="left:389.00px;top:283.42px;width:70.96px;height:21.26px;border:1px solid #96504e;"></div>
<div class="a" style="left:388.00px;top:282.42px;width:3.00px;height:3.00px;background:#a03848;"></div>
<div class="a" style="left:457.96px;top:282.42px;width:3.00px;height:3.00px;background:#a03848;"></div>
<div class="a" style="left:388.00px;top:302.68px;width:3.00px;height:3.00px;background:#a03848;"></div>
<div class="a" style="left:457.96px;top:302.68px;width:3.00px;height:3.00px;background:#a03848;"></div>
<div class="a" style="left:389.50px;top:304.18px;width:69.96px;height:20.26px;background:rgba(120,100,160,0.10);"></div>
<div class="a" style="left:390.00px;top:304.68px;width:68.96px;height:19.26px;border:1px solid rgba(255,235,220,0.45);"></div>
<div class="a" style="left:389.00px;top:303.68px;width:70.96px;height:21.26px;border:1px solid #7a6aa6;"></div>
<div class="a" style="left:388.00px;top:302.68px;width:3.00px;height:3.00px;background:#6a58b8;"></div>
<div class="a" style="left:457.96px;top:302.68px;width:3.00px;height:3.00px;background:#6a58b8;"></div>
<div class="a" style="left:388.00px;top:322.94px;width:3.00px;height:3.00px;background:#6a58b8;"></div>
<div class="a" style="left:457.96px;top:322.94px;width:3.00px;height:3.00px;background:#6a58b8;"></div>
<div class="t" style="left:443.00px;top:267px;font-size:13.6px;line-height:15px;color:#111;font-weight:400;transform:scaleX(0.9141);transform-origin:0 0;">34</div>
<div class="t" style="left:449.90px;top:288px;font-size:13.6px;line-height:15px;color:#111;font-weight:400;transform:scaleX(0.9141);transform-origin:0 0;">7</div>
<div class="t" style="left:430.70px;top:308px;font-size:13.6px;line-height:15px;color:#111;font-weight:400;transform:scaleX(0.9867);transform-origin:0 0;">0.92</div>
<div class="a" style="left:389.60px;top:343.90px;width:157.60px;height:26.70px;border:1.8px solid #c9474b;background:linear-gradient(to bottom,#bdd7ee 0,#bdd7ee 19px,#fff 19px);"></div>
<div class="a" style="left:391.40px;top:345.70px;width:154.00px;height:23.10px;border:0.8px solid rgba(255,200,200,0.55);"></div>
<div class="t" style="left:392.60px;top:348px;font-size:14.3px;line-height:16px;color:#111;font-weight:400;transform:scaleX(0.8995);transform-origin:0 0;">=CRITBINOM(<span style="color:#4f8fdc">C3</span>,<span style="color:#e0565c">C4</span>,<span style="color:#9d7fe0">C5</span>)</div>
<div class="a" style="left:537.40px;top:346.30px;width:1.00px;height:18.20px;background:#233240;"></div>
<div class="a" style="left:392.50px;top:365.00px;width:65.50px;height:1.00px;background:#2f7a4f;"></div>
<div class="a" style="left:458.00px;top:364.50px;width:2.50px;height:2.50px;background:#3a5a4a;"></div>
<svg style="left:708px;top:207.5px" width="8" height="6" viewBox="0 0 8 6"><path d="M4 0 L8 5.5 L0 5.5 Z" fill="#a8a8a8"/></svg>
<div class="a" style="left:708.50px;top:217.20px;width:6.30px;height:140.20px;background:#9c9c9c;border-radius:3.2px;"></div>
<svg style="left:708px;top:468px" width="8" height="6" viewBox="0 0 8 6"><path d="M0 0 L8 0 L4 5.5 Z" fill="#a8a8a8"/></svg>
<div class="a" style="left:2.00px;top:476.00px;width:717.00px;height:26.00px;background:#10150f;"></div>
<svg style="left:21.5px;top:484.6px" width="5.5" height="8" viewBox="0 0 5.5 8"><path d="M5 0.5 L0.8 4 L5 7.5" fill="none" stroke="#d8d8d8" stroke-width="1.1"/></svg>
<svg style="left:48px;top:484.6px" width="5.5" height="8" viewBox="0 0 5.5 8"><path d="M0.5 0.5 L4.7 4 L0.5 7.5" fill="none" stroke="#9a9a9a" stroke-width="1.1"/></svg>
<div class="a" style="left:71.5px;top:487.4px;width:2.2px;height:2.2px;border-radius:1.1px;background:#e8e8e8"></div>
<div class="a" style="left:75.3px;top:487.4px;width:2.2px;height:2.2px;border-radius:1.1px;background:#e8e8e8"></div>
<div class="a" style="left:79.1px;top:487.4px;width:2.2px;height:2.2px;border-radius:1.1px;background:#e8e8e8"></div>
<div class="t" style="left:100.00px;top:484px;font-size:10.6px;line-height:12px;color:#f0f0f0;font-weight:400;transform:scaleX(1.0206);transform-origin:0 0;-webkit-text-stroke:0.3px #f0f0f0;">Sheet14</div>
<div class="a" style="left:150.00px;top:482.80px;width:1.00px;height:13.90px;background:#444;"></div>
<div class="t" style="left:159.70px;top:484px;font-size:10.6px;line-height:12px;color:#f0f0f0;font-weight:400;transform:scaleX(1.0416);transform-origin:0 0;-webkit-text-stroke:0.3px #f0f0f0;">Sheet11</div>
<div class="a" style="left:209.20px;top:482.80px;width:1.00px;height:13.90px;background:#444;"></div>
<div class="t" style="left:219.80px;top:483px;font-size:10.6px;line-height:12px;color:#f0f0f0;font-weight:400;transform:scaleX(1.0206);transform-origin:0 0;-webkit-text-stroke:0.3px #f0f0f0;">Sheet12</div>
<div class="a" style="left:273.3px;top:474px;width:55px;height:23.7px;background:#fff;border-radius:0 0 5px 5px"></div>
<svg style="left:268.3px;top:476px" width="5" height="5"><path d="M0 0 H5 V5 A5 5 0 0 0 0 0 Z" fill="#fff"/></svg>
<svg style="left:328.3px;top:476px" width="5" height="5"><path d="M5 0 H0 V5 A5 5 0 0 1 5 0 Z" fill="#fff"/></svg>
<div class="t" style="left:280.70px;top:481px;font-size:10.6px;line-height:12px;color:#111;font-weight:400;transform:scaleX(1.0029);transform-origin:0 0;-webkit-text-stroke:0.35px #111;">Sheet16</div>
<div class="a" style="left:280.50px;top:494.80px;width:40.00px;height:1.80px;background:#2e7a5c;border-radius:1px;"></div>
<div class="a" style="left:329.80px;top:482.80px;width:1.00px;height:13.90px;background:#444;"></div>
<div class="a" style="left:365.70px;top:487.90px;width:9.30px;height:1.20px;background:#e8e8e8;"></div>
<div class="a" style="left:369.75px;top:483.80px;width:1.20px;height:9.40px;background:#e8e8e8;"></div>
<div class="a" style="left:434.7px;top:484.1px;width:2.2px;height:2.2px;border-radius:1.1px;background:#e8e8e8"></div>
<div class="a" style="left:434.7px;top:487.9px;width:2.2px;height:2.2px;border-radius:1.1px;background:#e8e8e8"></div>
<div class="a" style="left:434.7px;top:491.7px;width:2.2px;height:2.2px;border-radius:1.1px;background:#e8e8e8"></div>
<svg style="left:453.3px;top:485px" width="6" height="8" viewBox="0 0 6 8"><path d="M5.8 0 V8 L0 4 Z" fill="#a8a8a8"/></svg>
<div class="a" style="left:463.00px;top:485.50px;width:174.80px;height:7.00px;background:#9c9c9c;border-radius:3.5px;"></div>
<svg style="left:694.4px;top:485px" width="6.2" height="8" viewBox="0 0 6.2 8"><path d="M0 0 V8 L6 4 Z" fill="#a8a8a8"/></svg>
<div class="a" style="left:2.00px;top:502.00px;width:717.00px;height:18.00px;background:#161616;"></div>
<div class="a" style="left:2.00px;top:501.60px;width:717.00px;height:1.00px;background:#2c2c2c;"></div>
<div class="t" style="left:11.80px;top:506px;font-size:9.5px;line-height:11px;color:#e8e8e8;font-weight:400;transform:scaleX(0.8482);transform-origin:0 0;">Edit</div>
<svg style="left:49.5px;top:506.5px" width="14" height="11.5" viewBox="0 0 14 11.5"><path d="M0.7 1.8 H12.3" stroke="#d8d8d8" stroke-width="2"/><path d="M0.7 1 V10.8 H4.5 M12.3 1 V4.5" fill="none" stroke="#d8d8d8" stroke-width="1.1"/><path d="M3 5 V8.5" stroke="#d8d8d8" stroke-width="1"/><circle cx="8.3" cy="7.3" r="3.4" fill="#161616" stroke="#d8d8d8" stroke-width="1.1"/><circle cx="8.3" cy="7.3" r="1.3" fill="#d8d8d8"/></svg>
<svg style="left:75.5px;top:505.5px" width="12" height="12.5" viewBox="0 0 12 12.5"><circle cx="5.3" cy="2.2" r="1.5" fill="none" stroke="#dcdcdc" stroke-width="1"/><path d="M1 1.5 Q2 4.5 4.3 4.8 H6.3 Q8.6 4.5 9.6 1.5" fill="none" stroke="#dcdcdc" stroke-width="1"/><path d="M4.3 4.8 L3.8 8.5 L3 11.5 M6.3 4.8 L5.8 8" fill="none" stroke="#dcdcdc" stroke-width="1"/><circle cx="3" cy="11.3" r="0.9" fill="#dcdcdc"/><path d="M6.8 8 L11.2 12 M11.2 8 L6.8 12" stroke="#dcdcdc" stroke-width="1"/></svg>
<div class="t" style="left:90.30px;top:506px;font-size:9.6px;line-height:11px;color:#f0f0f0;font-weight:700;transform:scaleX(0.8952);transform-origin:0 0;">Accessibility: Investigate</div>
<svg style="left:477px;top:506px" width="11.5" height="11" viewBox="0 0 11.5 11"><path d="M0.5 0.5 H11 V10.5 H0.5 Z M4 0.5 V10.5 M7.5 0.5 V10.5 M0.5 3.8 H11 M0.5 7.2 H11" fill="none" stroke="#9a9a9a" stroke-width="0.9"/></svg>
<svg style="left:510px;top:506px" width="12" height="11" viewBox="0 0 12 11"><rect x="0.5" y="0.5" width="11" height="10" fill="none" stroke="#9a9a9a" stroke-width="0.9"/><rect x="3" y="2.5" width="6" height="6" fill="none" stroke="#9a9a9a" stroke-width="0.9"/><path d="M3 5.5 H9" stroke="#9a9a9a" stroke-width="0.8"/></svg>
<svg style="left:542.8px;top:506px" width="12" height="11" viewBox="0 0 12 11"><path d="M0.5 0.5 V10.5 H11.5 V0.5 M3.5 0.5 V6.5 H8.5 V0.5" fill="none" stroke="#9a9a9a" stroke-width="0.9"/></svg>
<div class="a" style="left:569.30px;top:511.10px;width:6.70px;height:1.00px;background:#6a6a6a;"></div>
<div class="a" style="left:580.40px;top:511.00px;width:81.80px;height:1.20px;background:#d8d8d8;"></div>
<div class="a" style="left:620.50px;top:507.50px;width:1.20px;height:8.00px;background:#d8d8d8;"></div>
<div class="a" style="left:666.70px;top:511.10px;width:6.20px;height:1.00px;background:#6a6a6a;"></div>
<div class="a" style="left:669.30px;top:508.50px;width:1.00px;height:6.20px;background:#6a6a6a;"></div>
<div class="t" style="left:683.30px;top:506px;font-size:9.5px;line-height:11px;color:#8a8a8a;font-weight:400;transform:scaleX(0.8676);transform-origin:0 0;">100%</div>
<div class="a" style="left:1.00px;top:0.40px;width:719.60px;height:520.60px;border:1px solid #8c8c8c;border-radius:8px;"></div>
</div></body></html>
